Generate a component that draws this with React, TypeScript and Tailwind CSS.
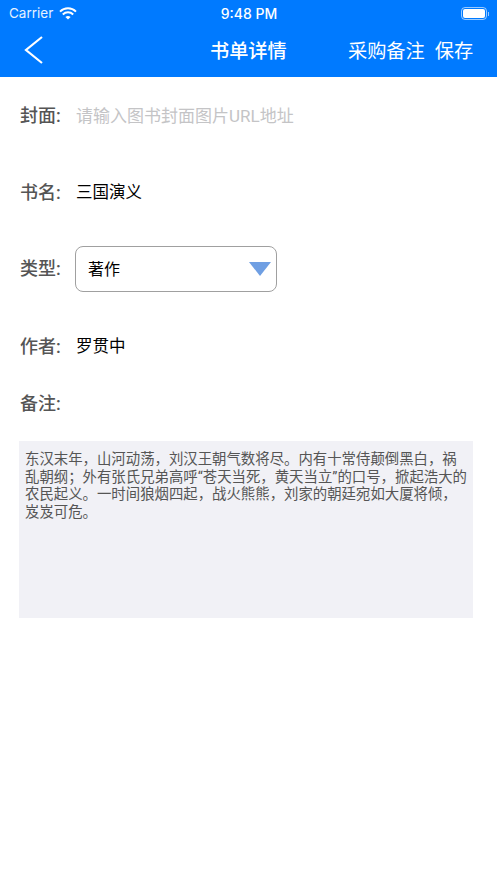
import React from "react";

const cjk = "font-['Roboto','Noto_Sans_CJK_SC',sans-serif]";

const Row = ({ label, children, className }: { label: string; children?: React.ReactNode; className?: string }) => (
  <div className={`flex items-center px-5 ${className}`}>
    <span className="w-[55px] shrink-0 text-[18px] leading-[24px] font-medium text-[#555]">{label}</span>
    {children}
  </div>
);

export default function App() {
  return (
    <div className={`flex h-[883px] w-[497px] flex-col bg-white ${cjk}`}>
      <div className="h-[77px] shrink-0 bg-[#007aff] text-white">
        <div className="flex h-[27px] items-center justify-between pl-[9px] pr-[8px] font-['Inter',sans-serif] text-[14px]">
          <div className="flex w-[80px] items-center gap-[6px]">
            <span className="text-[13.5px] opacity-90">Carrier</span>
            <svg width="18" height="13" viewBox="0 0 18 13" fill="none" stroke="white" strokeWidth="2">
              <path d="M1 4.6C5.5 .2 12.5 .2 17 4.6" />
              <path d="M3.8 7.4C6.8 4.6 11.2 4.6 14.2 7.4" />
              <path d="M9 12.6L6.4 10C8 8.6 10 8.6 11.6 10Z" fill="white" stroke="none" />
            </svg>
          </div>
          <span className="font-medium">9:48 PM</span>
          <div className="flex w-[80px] items-center justify-end">
            <div className="flex h-[13px] w-[26px] items-center rounded-[4px] border border-white/60 p-[1px]">
              <div className="h-full w-full rounded-[2px] bg-white" />
            </div>
            <div className="ml-[1px] h-[4px] w-[1px] bg-white/60" />
          </div>
        </div>
        <div className="flex h-[50px] items-center">
          <svg className="ml-[24px] -mt-[4px] shrink-0" width="20" height="30" viewBox="0 0 20 30" fill="none" stroke="white" strokeWidth="2.2">
            <path d="M18 2L2 15L18 28" />
          </svg>
          <span className="ml-[166px] w-[76px] text-center text-[19.2px] font-medium whitespace-nowrap">书单详情</span>
          <span className="ml-[62px] text-[19.2px] whitespace-nowrap">采购备注</span>
          <span className="ml-[10px] text-[19.2px] whitespace-nowrap">保存</span>
        </div>
      </div>

      <Row label="封面:" className="mt-[27px]">
        <span className="ml-[1px] text-[17px] leading-[24px] text-[#c4c4c6]">请输入图书封面图片URL地址</span>
      </Row>
      <Row label="书名:" className="mt-[53px]">
        <span className="ml-[1px] text-[16.5px] leading-[24px] text-black">三国演义</span>
      </Row>
      <Row label="类型:" className="mt-[41px]">
        <div className="flex h-[46px] w-[202px] items-center justify-between rounded-[8px] border-[1.5px] border-[#a0a0a0] pl-[12px] pr-[5px]">
          <span className="pt-[2px] text-[16px] text-black">著作</span>
          <div className="h-[14px] w-[22px] bg-[#6f9fe3] [clip-path:polygon(0_0,100%_0,50%_100%)]" />
        </div>
      </Row>
      <Row label="作者:" className="mt-[43px]">
        <span className="ml-[1px] text-[16.5px] leading-[24px] text-black">罗贯中</span>
      </Row>
      <Row label="备注:" className="mt-[33px]" />

      <div className="mx-[19px] mt-[25px] h-[177px] w-[454px] bg-[#f1f1f6] pr-[5px] pl-[6px] pt-[10px] text-[14.4px] leading-[17.5px] text-[#555]">
        东汉末年，山河动荡，刘汉王朝气数将尽。内有十常侍颠倒黑白，祸乱朝纲；外有张氏兄弟高呼“苍天当死，黄天当立”的口号，掀起浩大的农民起义。一时间狼烟四起，战火熊熊，刘家的朝廷宛如大厦将倾，岌岌可危。
      </div>
    </div>
  );
}
